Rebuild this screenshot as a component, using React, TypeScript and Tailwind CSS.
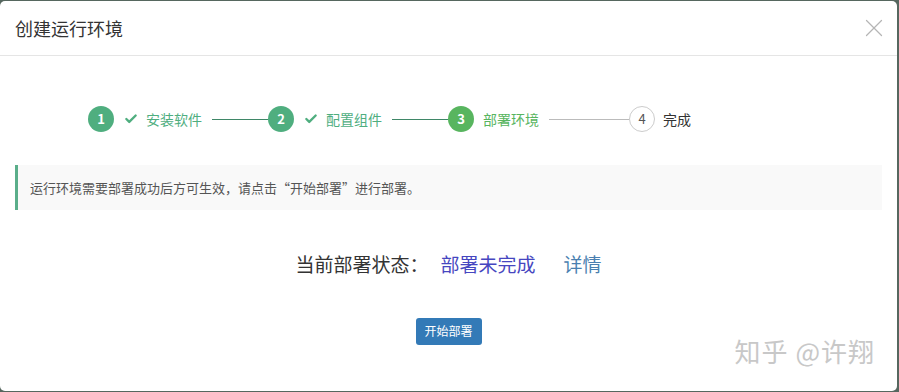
import { Check, X } from "lucide-react";

const steps = [
  { n: 1, label: "安装软件", state: "done" },
  { n: 2, label: "配置组件", state: "done" },
  { n: 3, label: "部署环境", state: "active" },
  { n: 4, label: "完成", state: "todo" },
];

export default function App() {
  return (
    <div
      className="h-[392px] w-[899px] bg-[#56675f] pt-px pr-[2px] pb-px"
      style={{ fontFamily: '"Noto Sans CJK SC", "Noto Sans", sans-serif' }}
    >
      <div className="flex h-full flex-col rounded-[5px] bg-white">
        {/* header */}
        <div className="flex h-[55px] items-center justify-between border-b border-[#e5e5e5] pl-[15px] pr-[8px]">
          <h4 className="text-[18px] text-[#333]">创建运行环境</h4>
          <X className="h-[30px] w-[30px] text-[#b5b5b5]" strokeWidth={1} />
        </div>

        {/* steps */}
        <div className="mt-[50px] flex items-center pl-[88px]">
          {steps.map((s, i) => (
            <div key={s.n} className="flex items-center">
              {s.state === "todo" ? (
                <div className="flex h-[26px] w-[26px] items-center justify-center rounded-full border border-[#ccc] text-[13px] text-[#555]">
                  {s.n}
                </div>
              ) : (
                <div
                  className={
                    s.state === "done"
                      ? "flex h-[26px] w-[26px] items-center justify-center rounded-full bg-[#4fae7f] text-[13px] font-bold text-white"
                      : "flex h-[26px] w-[26px] items-center justify-center rounded-full bg-[#58b55f] text-[13px] font-bold text-white"
                  }
                >
                  {s.n}
                </div>
              )}
              {s.state === "done" && (
                <Check className="ml-[10px] h-[14px] w-[14px] text-[#4fae7f]" strokeWidth={4} />
              )}
              <span
                className={
                  s.state === "done"
                    ? "ml-[8px] text-[14px] text-[#4fae7f]"
                    : s.state === "active"
                      ? "ml-[9px] text-[14px] text-[#58b55f]"
                      : "ml-[8px] text-[14px] text-[#333]"
                }
              >
                {s.label}
              </span>
              {i < steps.length - 1 && (
                <div
                  className={
                    s.state === "done"
                      ? "ml-[10px] h-px w-[56px] bg-[#3f8767]"
                      : "ml-[10px] h-px w-[80px] bg-[#bbb]"
                  }
                />
              )}
            </div>
          ))}
        </div>

        {/* alert */}
        <div className="mx-[15px] mt-[33px] flex h-[45px] items-center border-l-[3px] border-[#5aae8a] bg-[#f9f9f9] pl-[12px] text-[13px] text-[#555]">
          运行环境需要部署成功后方可生效，请点击“开始部署”进行部署。
        </div>

        {/* status */}
        <div className="mt-[40px] flex items-center justify-center text-[19px]">
          <span className="text-[#333]">当前部署状态：</span>
          <span className="ml-[12px] text-[#4646c0]">部署未完成</span>
          <span className="ml-[28px] text-[#4a7fb0]">详情</span>
        </div>

        {/* button + watermark */}
        <div className="relative mt-[39px] flex justify-center">
          <button className="h-[27px] w-[66px] rounded-[3px] bg-[#337ab7] text-[12px] text-white">
            开始部署
          </button>
          <span className="absolute right-[22px] top-[13px] text-[26px] tracking-[1px] text-[#c8c8c8]">知乎 @许翔</span>
        </div>
      </div>
    </div>
  );
}
